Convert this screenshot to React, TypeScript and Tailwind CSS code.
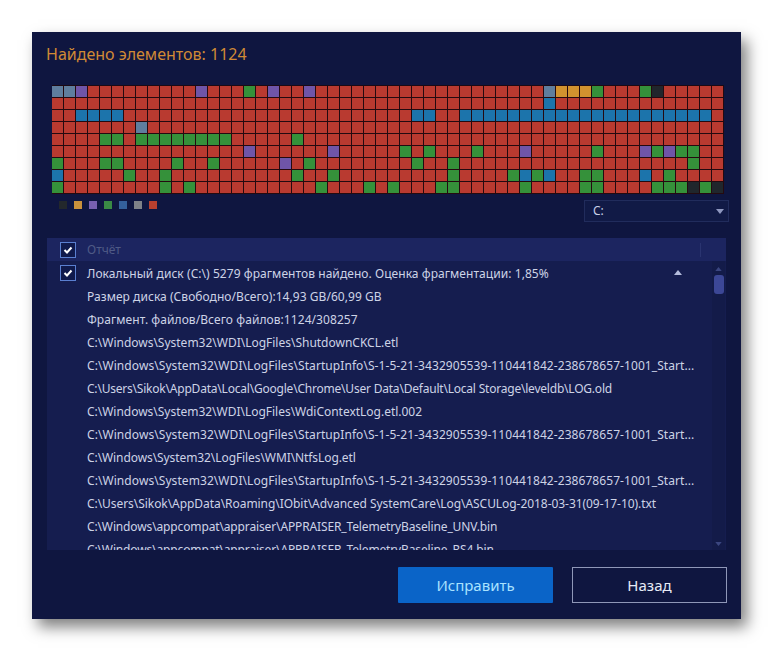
const rows = 9
const cols = 56

const colors: Record<string, string> = {
  r: 'bg-[#b93a30]',
  s: 'bg-[#5f7e9e]',
  p: 'bg-[#6f55a8]',
  g: 'bg-[#35913a]',
  b: 'bg-[#1c74ab]',
  o: 'bg-[#d1922f]',
  d: 'bg-[#20262c]',
}

// row -> column -> colour key, everything else is red
const marks: Record<number, Record<string, number[]>> = {
  0: { s: [0, 1, 41], p: [2, 12, 18, 21], g: [16, 45, 49], o: [42, 43, 44], d: [50] },
  1: { b: [41] },
  2: { b: [2, 3, 4, 5, 30, 31, 34, 35, 36, 37, 38, 39, 40, 41, 42, 43, 44, 45, 46, 47, 48, 49, 50, 51, 52, 53, 54] },
  3: { s: [7] },
  4: { g: [4, 5, 7, 8, 9, 10, 11, 12, 13, 14, 20] },
  5: { p: [16, 23, 39, 49, 51], g: [29, 31, 35, 45, 50, 52, 53] },
  6: { g: [0, 4, 5, 10, 13, 21, 30, 33, 53], p: [19] },
  7: { b: [0, 39, 41, 49], g: [6, 9, 20, 23, 33, 38, 40, 44, 45, 51] },
  8: { g: [0, 9, 11, 22, 26, 28, 32, 33, 39, 44, 45, 50, 51, 52, 54], d: [53, 55] },
}

function cellColor(row: number, col: number) {
  const m = marks[row]
  if (m) {
    for (const key of Object.keys(m)) {
      if (m[key].includes(col)) return colors[key]
    }
  }
  return colors.r
}

const legend = ['bg-[#23282c]', 'bg-[#c9913c]', 'bg-[#7860b0]', 'bg-[#3a8a45]', 'bg-[#34609c]', 'bg-[#7f8288]', 'bg-[#b8402f]']

const files = [
  { text: 'Размер диска (Свободно/Всего):14,93 GB/60,99 GB', cls: 'tracking-[0.05px]' },
  { text: 'Фрагмент. файлов/Всего файлов:1124/308257', cls: 'tracking-[0.07px]' },
  { text: 'C:\\Windows\\System32\\WDI\\LogFiles\\ShutdownCKCL.etl', cls: 'tracking-[-0.01px]' },
  { text: 'C:\\Windows\\System32\\WDI\\LogFiles\\StartupInfo\\S-1-5-21-3432905539-110441842-238678657-1001_Start...', cls: 'tracking-[0.07px]' },
  { text: 'C:\\Users\\Sikok\\AppData\\Local\\Google\\Chrome\\User Data\\Default\\Local Storage\\leveldb\\LOG.old', cls: 'tracking-[-0.21px]' },
  { text: 'C:\\Windows\\System32\\WDI\\LogFiles\\WdiContextLog.etl.002', cls: 'tracking-[-0.02px]' },
  { text: 'C:\\Windows\\System32\\WDI\\LogFiles\\StartupInfo\\S-1-5-21-3432905539-110441842-238678657-1001_Start...', cls: 'tracking-[0.07px]' },
  { text: 'C:\\Windows\\System32\\LogFiles\\WMI\\NtfsLog.etl', cls: 'tracking-[-0.085px]' },
  { text: 'C:\\Windows\\System32\\WDI\\LogFiles\\StartupInfo\\S-1-5-21-3432905539-110441842-238678657-1001_Start...', cls: 'tracking-[0.07px]' },
  { text: 'C:\\Users\\Sikok\\AppData\\Roaming\\IObit\\Advanced SystemCare\\Log\\ASCULog-2018-03-31(09-17-10).txt', cls: 'tracking-[-0.056px]' },
  { text: 'C:\\Windows\\appcompat\\appraiser\\APPRAISER_TelemetryBaseline_UNV.bin', cls: 'tracking-[-0.136px]' },
  { text: 'C:\\Windows\\appcompat\\appraiser\\APPRAISER_TelemetryBaseline_RS4.bin', cls: 'tracking-[-0.136px]' },
]

function Check() {
  return (
    <div className="w-[16px] h-[16px] border border-[#5a7fd0] bg-[#101a4c] flex items-center justify-center shrink-0">
      <svg className="w-[10px] h-[10px] text-white" viewBox="0 0 10 10" fill="none" stroke="currentColor" strokeWidth={2}>
        <path d="M1.5 5l2.5 2.5 4.5-5" />
      </svg>
    </div>
  )
}

export default function App() {
  return (
    <div className="w-[773px] h-[651px] bg-white pt-[32px] pl-[32px] font-['Noto_Sans',sans-serif]">
      <div className="w-[709px] h-[587px] bg-[#0f1640] shadow-[6px_8px_14px_rgba(0,0,0,0.5)] flex flex-col">
        <div className="h-[53px] pl-[14px] pt-[10px] text-[16px] leading-[24px] text-[#d18a35]">Найдено элементов: 1124</div>

        <div className="ml-[20px] w-[672px] grid grid-cols-[repeat(56,12px)] border-t border-[#1c0a14]">
          {Array.from({ length: rows * cols }, (_, i) => (
            <div key={i} className={`h-[12px] border-r border-b border-[#240a10] ${cellColor(Math.floor(i / cols), i % cols)}`} />
          ))}
        </div>

        <div className="h-[44px] flex items-start justify-between pl-[27px] pr-[12px]">
          <div className="flex gap-[7px] pt-[7px]">
            {legend.map((c) => (
              <div key={c} className={`w-[8px] h-[8px] ${c}`} />
            ))}
          </div>
          <div className="w-[145px] h-[22px] mt-[6px] border border-[#212c5c] bg-[#111a46] flex items-center justify-between pl-[8px] pr-[4px] text-[12px] text-[#c8d0e8]">
            <span>C:</span>
            <svg className="w-[8px] h-[5px] text-[#8f98c0]" viewBox="0 0 8 5" fill="currentColor">
              <path d="M0 0h8L4 5z" />
            </svg>
          </div>
        </div>

        <div className="ml-[15px] w-[679px] h-[312px] bg-[#151d4f] flex flex-col overflow-hidden">
          <div className="h-[23px] bg-[#1c2560] flex items-center pl-[13px] gap-[11px] text-[12px] shrink-0">
            <Check />
            <span className="text-[#4f5a86] flex-1">Отчёт</span>
            <div className="w-[1px] h-[14px] bg-[#2a3470] mr-[25px]" />
          </div>
          <div className="flex flex-1 min-h-0">
            <div className="flex-1 min-w-0 overflow-hidden text-[12px] text-[#cdd3e6]">
              <div className="h-[23px] flex items-center pl-[13px] pr-[30px] gap-[11px]">
                <Check />
                <span className="flex-1 whitespace-nowrap mt-[2px] tracking-[0.06px]">Локальный диск (C:\) 5279 фрагментов найдено. Оценка фрагментации: 1,85%</span>
                <svg className="w-[8px] h-[5px] text-[#b4bcdc]" viewBox="0 0 8 5" fill="currentColor">
                  <path d="M4 0l4 5H0z" />
                </svg>
              </div>
              {files.map((f, i) => (
                <div key={i} className={`h-[23px] leading-[25px] pl-[40px] whitespace-nowrap ${f.cls}`}>{f.text}</div>
              ))}
            </div>
            <div className="w-[13px] shrink-0 flex flex-col items-center bg-[#131b49] mr-[1px]">
              <svg className="w-[7px] h-[4px] mt-[6px] text-[#3b4680]" viewBox="0 0 8 5" fill="currentColor">
                <path d="M4 0l4 5H0z" />
              </svg>
              <div className="w-[10px] h-[19px] mt-[4px] rounded-[3px] bg-[#3c4796]" />
              <div className="flex-1" />
              <svg className="w-[7px] h-[4px] mb-[4px] text-[#3b4680]" viewBox="0 0 8 5" fill="currentColor">
                <path d="M0 0h8L4 5z" />
              </svg>
            </div>
          </div>
        </div>

        <div className="flex justify-end gap-[19px] pr-[14px] pt-[17px]">
          <button className="w-[155px] h-[36px] bg-[#0a64c8] rounded-[1px] text-[15px] text-[#a9e2ff]">Исправить</button>
          <button className="w-[155px] h-[36px] border border-[#8f97b8] text-[15px] text-[#e6eaf6]">Назад</button>
        </div>
      </div>
    </div>
  )
}
